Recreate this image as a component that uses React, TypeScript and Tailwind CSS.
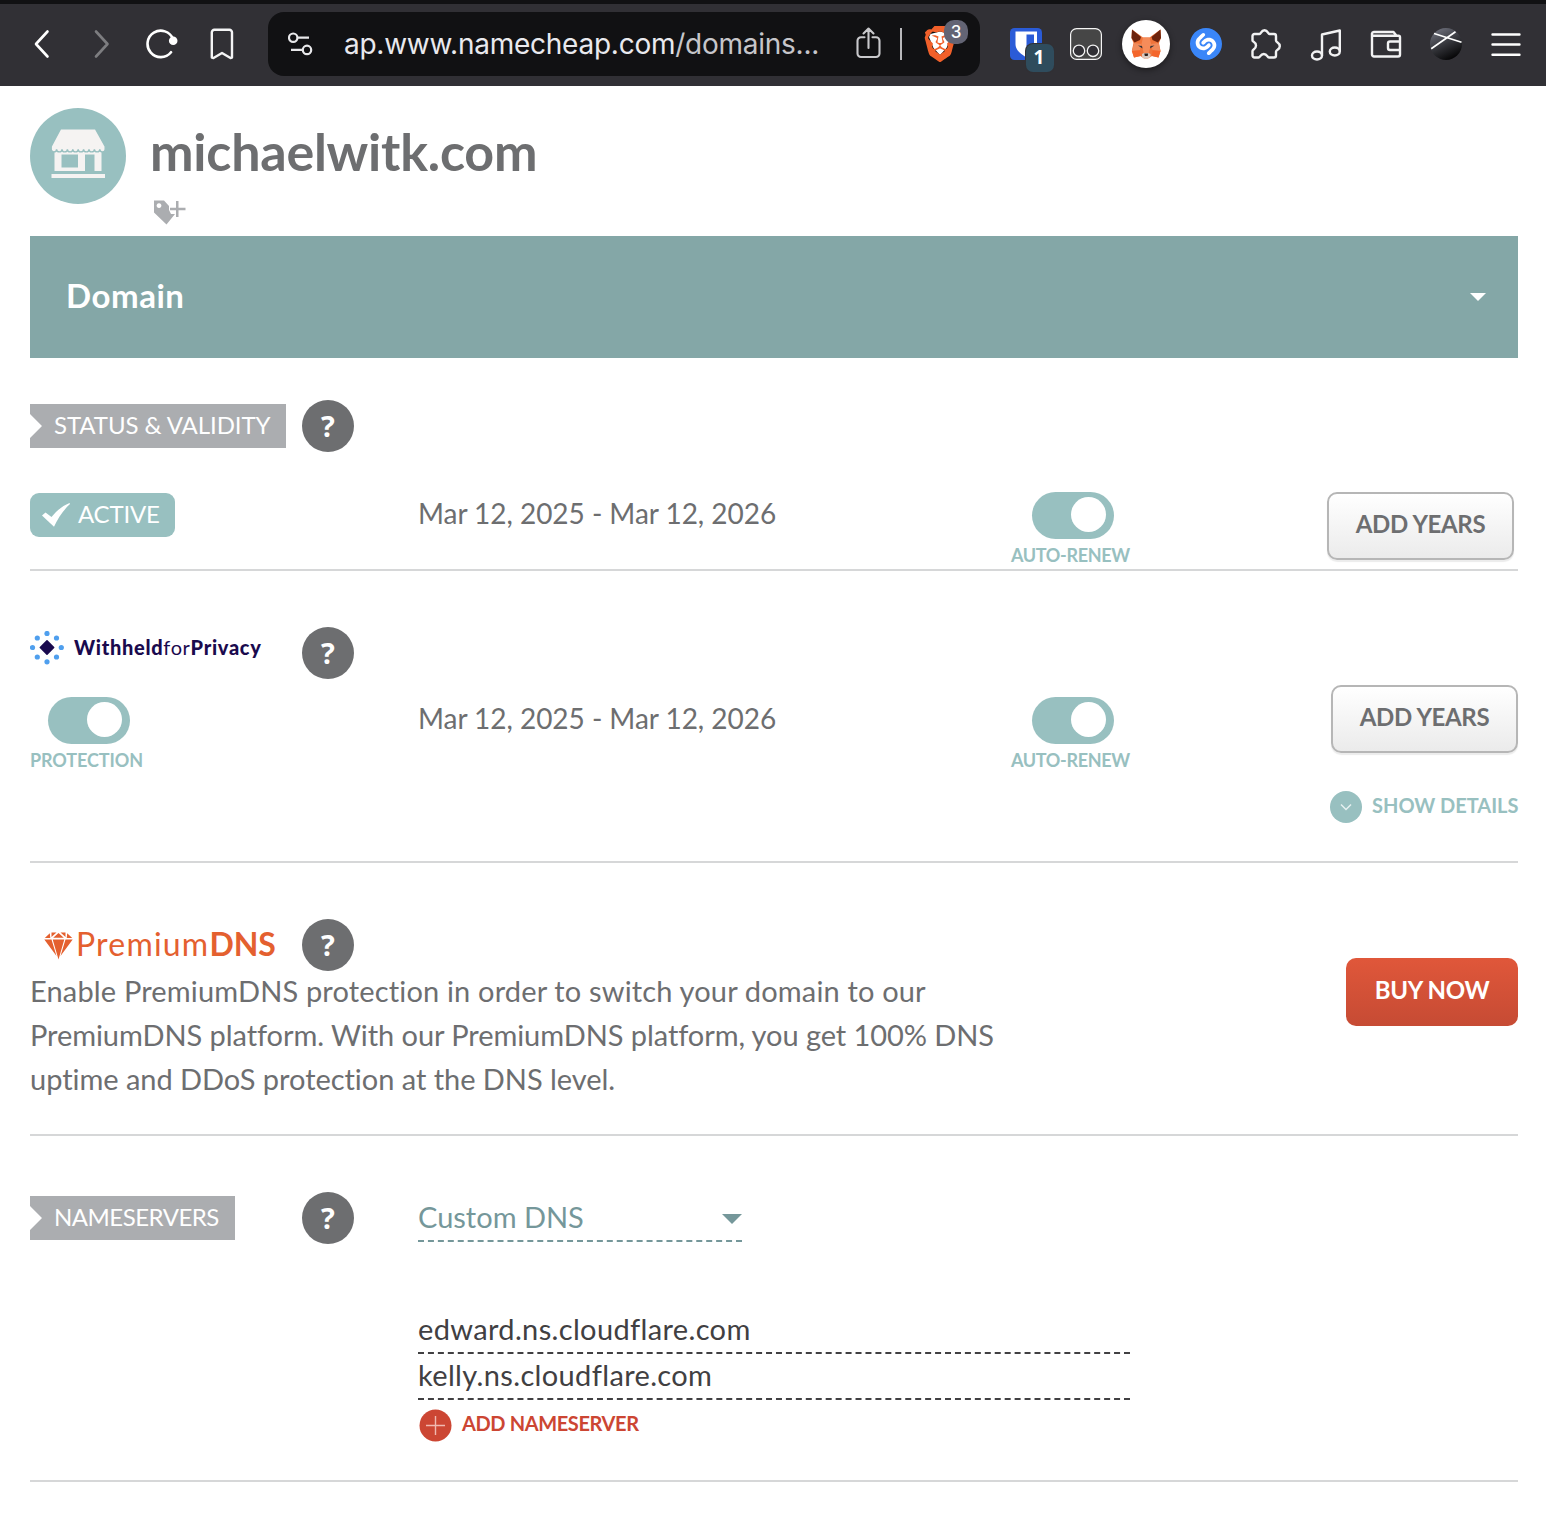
import React from "react";
import { SiBrave, SiShazam } from "react-icons/si";

const LINE = "#f2f2f3";

function BitwardenIcon() {
  return (
    <div className="relative h-8 w-8">
      <svg className="block" width="32" height="32" viewBox="0 0 32 32">
        <rect width="32" height="32" rx="4.5" fill="#2a5bd7" />
        <path d="M5.5 3.5H27V16c0 6-5 10-10.800 13C10.500 26 5.500 22 5.500 16Z" fill="#fff" />
        <path d="M16.500 6.500H24V16c0 4-3.500 7-7.500 9.500Z" fill="#2a5bd7" />
      </svg>
      <span className="absolute left-[15px] top-[15px] h-[30px] w-[30px] rounded-[8px] bg-[#313035]" />
      <span className="absolute left-4 top-4 flex h-7 w-7 items-center justify-center rounded-[7px] bg-[#2f4c5d] pb-[1px] pr-[2px] font-['Open_Sans',sans-serif] text-[19px] font-bold leading-none text-white">
        1
      </span>
    </div>
  );
}

function TampermonkeyIcon() {
  return (
    <svg width="32" height="32" viewBox="0 0 32 32" stroke="#f5f5f5">
      <rect x=".6" y=".6" width="30.800" height="30.800" rx="6" fill="#464646" strokeWidth="1.200" />
      <circle cx="9" cy="22.800" r="5.700" fill="#313035" strokeWidth="1.300" />
      <circle cx="23" cy="22.800" r="5.700" fill="#313035" strokeWidth="1.300" />
    </svg>
  );
}

function FoxIcon() {
  return (
    <div className="h-12 w-12 rounded-full bg-white shadow-[0_2px_6px_rgba(0,0,0,0.45)]">
      <svg width="48" height="48" viewBox="0 0 48 48">
        <path d="M10 9.500 21 17.500H27.500L38.500 9.500 39 18 37 23 38.500 31 36.500 37.500 30 36 26 38.500H22L18.500 36 12 37.500 9.800 31 11.500 23 9.500 18Z" fill="#f0743a" />
        <path d="M10 9.500 19 17 18 20 12.500 22.500 9.500 18Z" fill="#6d230c" />
        <path d="M38.500 9.500 29.500 17 30.500 20 36 22.500 39 18Z" fill="#6d230c" />
        <path d="M21 17.500H27.500L29 24 26.500 34H22L19.500 24Z" fill="#f58c5a" />
        <path d="M12 23 19.500 24 18 30 10 31Z" fill="#f08b5c" />
        <path d="M36.500 23 29 24 30.500 30 38.500 31Z" fill="#f08b5c" />
        <path d="M10 31 18 30.500 18.500 36 12 37.500Z" fill="#f4662c" />
        <path d="M38.500 31 30.500 30.500 30 36 36.500 37.500Z" fill="#f4662c" />
        <path d="M20 34 22 33H26.500L28.500 34 28.500 36.500 26 38.500H22L20 36.500Z" fill="#d9c9c0" />
        <path d="M22.300 33.500H26.200L25.700 36H22.800Z" fill="#2b211c" />
        <path d="m16 25.500 4 .5.500 2.500ZM32.500 25.500 28.500 26 28 28.500Z" fill="#2f343b" />
      </svg>
    </div>
  );
}

function Toolbar() {
  return (
    <header className="flex h-[86px] items-center border-t-4 border-[#111113] bg-[#313035] pb-[2px]">
      <div className="ml-[30px] flex w-[206px] items-center">
        <svg width="24" height="32" viewBox="0 0 24 32" fill="none" stroke="#fff" strokeWidth="2.600" strokeLinecap="round" strokeLinejoin="round">
          <path d="M17.500 3.500 6 16 17.500 28.500" />
        </svg>
        <svg className="ml-9" width="24" height="32" viewBox="0 0 24 32" fill="none" stroke="#7d7d80" strokeWidth="2.600" strokeLinecap="round" strokeLinejoin="round">
          <path d="M6 3.500 17.500 16 6 28.500" />
        </svg>
        <svg className="ml-8" width="32" height="32" viewBox="0 0 32 32" fill="none" stroke="#fff" strokeWidth="2.600" strokeLinecap="round">
          <path d="M27 11A13.200 13.200 0 1 0 25 24.200" />
          <circle cx="27.200" cy="12.800" r="3" fill="#fff" />
        </svg>
        <svg className="ml-[30px]" width="28" height="32" viewBox="0 0 28 32" fill="none" stroke="#f4f4f5" strokeWidth="2.400" strokeLinejoin="round">
          <path d="M6.300 1.800H21.500a2.500 2.500 0 0 1 2.500 2.500V29.600L22.500 30 14 25 5.500 30 3.800 29.600V4.300A2.500 2.500 0 0 1 6.300 1.800Z" />
        </svg>
      </div>
      <div className="ml-8 flex h-16 w-[712px] items-center rounded-[16px] bg-[#111113]">
        <svg className="ml-5" width="26" height="26" viewBox="0 0 26 26" fill="none" stroke="#e8e8ea" strokeWidth="2.200">
          <circle cx="5.200" cy="6.700" r="4.200" />
          <path d="M9.500 6.700H21M3 18.900H14.500" />
          <circle cx="19" cy="18.900" r="4.200" />
        </svg>
        <div className="ml-[30px] w-[476px] whitespace-nowrap font-['Inter',sans-serif] text-[28px] leading-[34px] tracking-[-0.25px] text-[#e9e9ee]">
          ap.www.namecheap.com<span className="text-[#c6c6ca]">/domains...</span>
        </div>
        <svg className="ml-9" width="26" height="34" viewBox="0 0 26 34" fill="none" stroke="#c9c9cc" strokeWidth="2.100" strokeLinecap="round" strokeLinejoin="round">
          <path d="M8.500 10.300H5a3.500 3.500 0 0 0-3.500 3.500V26.500a3.500 3.500 0 0 0 3.500 3.500H20a3.500 3.500 0 0 0 3.500-3.500V13.800A3.500 3.500 0 0 0 20 10.300H16.500M12.500 21V1.800M7.500 6.500 12.500 1.500 17.500 6.500" />
        </svg>
        <div className="ml-[18px] h-8 w-[2px] bg-[#b9b9bc]" />
        <div className="relative ml-5 h-9 w-9">
          <svg className="block" width="36" height="36" viewBox="0 0 36 36">
            <path d="M8.500 8 18 5.500 27.500 8 29 11 24.500 22 18 29 11.500 22 7 11Z" fill="#fff" />
            <SiBrave size={36} color="#f1602a" />
          </svg>
          <span className="absolute left-[22px] top-[-6px] flex h-6 w-6 items-center justify-center rounded-[10px] bg-[#636474] font-['Inter',sans-serif] text-[17px] font-medium leading-none text-white">
            3
          </span>
        </div>
      </div>
      <div className="ml-[30px] flex w-[512px] items-center justify-between">
        <BitwardenIcon />
        <TampermonkeyIcon />
        <div className="-mx-2">
          <FoxIcon />
        </div>
        <svg width="32" height="32" viewBox="0 0 32 32">
          <circle cx="16" cy="16" r="14" fill="#fff" />
          <SiShazam size={32} color="#3a86f8" />
        </svg>
        <svg width="32" height="32" viewBox="0 0 32 32" fill="none" stroke={LINE} strokeWidth="2.400" strokeLinejoin="round">
          <path d="M4.500 6H9.500C11.200 6 11 2.300 14.500 2.300S17.800 6 19.500 6H24a2 2 0 0 1 2 2V12.500C26 14.800 29.800 14.500 29.800 18.200S26 21.500 26 23.800V27.500a2 2 0 0 1-2 2H19C17 29.500 17.500 26 13.800 26S10.500 29.500 8.500 29.500H4.500a2 2 0 0 1-2-2V23C2.500 21.500 6 21.300 6 17.500S2.500 14 2.500 12.500V8a2 2 0 0 1 2-2Z" />
        </svg>
        <svg width="32" height="34" viewBox="0 0 32 34" fill="none" stroke={LINE} strokeWidth="2.400" strokeLinejoin="round">
          <ellipse cx="7" cy="28.500" rx="5" ry="4" />
          <ellipse cx="24.800" cy="24.500" rx="5" ry="4" />
          <path d="M12 28.500V7.500L29.800 3.500V24.500" />
        </svg>
        <svg width="32" height="32" viewBox="0 0 32 32" fill="none" stroke={LINE} strokeWidth="2.400" strokeLinejoin="round">
          <path d="M2 5.500A1.800 1.800 0 0 1 3.800 4H23.500L26.500 7.800H28.500A1.500 1.500 0 0 1 30 9.300V26.500A2 2 0 0 1 28 28.500H4a2 2 0 0 1-2-2ZM2.500 7.800H27M30 13.500H20a2 2 0 0 0-2 2V20a2 2 0 0 0 2 2H30" />
        </svg>
        <svg width="32" height="32" viewBox="0 0 32 32">
          <defs>
            <linearGradient id="orb" x1="0.100" y1="0" x2=".6" y2="1">
              <stop offset="0" stopColor="#757784" />
              <stop offset=".5" stopColor="#3a3b41" />
              <stop offset="1" stopColor="#060607" />
            </linearGradient>
          </defs>
          <circle cx="16" cy="16" r="16" fill="url(#orb)" />
          <path d="M4 5.500 31.500 14.200M1.200 20.700 25.500 3.700" stroke="#fff" strokeWidth="1.700" />
        </svg>
        <svg width="32" height="32" viewBox="0 0 32 32" stroke="#fff" strokeWidth="2.400" strokeLinecap="round">
          <path d="M2.500 6.500H29.500M2.500 16.500H29.500M2.500 26.700H29.500" />
        </svg>
      </div>
    </header>
  );
}

function Help() {
  return (
    <span className="flex h-[52px] w-[52px] items-center justify-center rounded-full bg-[#6d6e70] pb-[2px] font-['Open_Sans',sans-serif] text-[29px] font-bold leading-none text-white">
      ?
    </span>
  );
}

function Ribbon({ children, className }: { children: React.ReactNode; className: string }) {
  return (
    <div className={"flex h-11 items-center whitespace-nowrap bg-[#abadb0] pb-[2px] text-[24px] leading-none text-white [clip-path:polygon(0_0,100%_0,100%_100%,0_100%,0_34px,12px_22px,0_10px)] " + className}>
      {children}
    </div>
  );
}

function Toggle() {
  return (
    <div className="flex h-[47px] w-[82px] items-center justify-end rounded-full bg-[#98c0c0] pr-2">
      <span className="mb-[2px] h-[35px] w-[35px] rounded-full bg-white" />
    </div>
  );
}

function AutoRenew() {
  return (
    <div className="w-[130px]">
      <div className="ml-[21px]">
        <Toggle />
      </div>
      <div className="mt-[5px] whitespace-nowrap text-[18px] font-bold leading-[22px] tracking-[-0.350px] text-[#98c0c0]">
        AUTO-RENEW
      </div>
    </div>
  );
}

function AddYears() {
  return (
    <button className="flex h-[68px] w-[187px] items-center justify-center rounded-[10px] border-2 border-[#b6b6b6] bg-linear-to-b from-white to-[#ebebeb] pb-1 text-[24px] font-bold leading-none tracking-[-0.350px] text-[#6d6e70] shadow-[0_2px_1px_#ececec]">
      ADD YEARS
    </button>
  );
}

function WithheldLogo() {
  const dots = [
    [17, 2.500], [26.500, 7], [31.300, 16.500], [26.500, 26], [17, 30.800], [7.300, 26], [2.500, 16.500], [7.300, 7],
  ];
  return (
    <div className="flex h-[34px] w-[272px] items-center">
      <svg className="mt-[2px]" width="34" height="34" viewBox="0 0 34 34">
        {dots.map(([x, y]) => (
          <circle key={x + "-" + y} cx={x} cy={y} r="2.600" fill="#4f9fee" />
        ))}
        <path d="M17 9.800 23.700 16.500 17 23.200 10.300 16.500Z" fill="#1a0a4e" stroke="#1a0a4e" strokeWidth="1.500" strokeLinejoin="round" />
      </svg>
      <span className="ml-[10px] whitespace-nowrap text-[20px] leading-[34px] tracking-[0.650px] text-[#1a0a4e]">
        <b className="font-black tracking-[0.700px]">Withheld</b>for<b className="font-black tracking-[0.700px]">Privacy</b>
      </span>
    </div>
  );
}

function PremiumLogo() {
  return (
    <div className="flex h-[52px] w-[272px] items-center pl-[14px]">
      <svg className="mt-[2px] shrink-0" width="29" height="28" viewBox="0 0 29 28" fill="#e4602f">
        <path d="M7.500.5 12.500.5 7.500 5ZM21.500.5H16.500L21.500 5ZM14.500 1 19.800 5.800H9.200ZM5.800 1.200 6.300 6H.8ZM23.200 1.200 22.700 6H28.200Z" />
        <path d="M.3 7.500H7.500L12.500 24ZM28.700 7.500H21.500L16.500 24ZM8.700 7.500H20.300L14.500 27.500Z" />
      </svg>
      <span className="ml-[3px] whitespace-nowrap pb-[2px] text-[32px] leading-[40px] text-[#e4602f]">
        <span className="tracking-[1.200px]">Premium</span>
        <b className="font-bold">DNS</b>
      </span>
    </div>
  );
}

const blurb: [string, string][] = [
  ["tracking-[0.160px]", "Enable PremiumDNS protection in order to switch your domain to our"],
  ["tracking-[-0.070px]", "PremiumDNS platform. With our PremiumDNS platform, you get 100% DNS"],
  ["tracking-[-0.040px]", "uptime and DDoS protection at the DNS level."],
];

export default function App() {
  return (
    <div className="min-h-[1514px] w-[1546px] bg-white font-['Lato',sans-serif] text-[#6d6e70] [font-variant-ligatures:none]">
      <Toolbar />
      <main className="ml-[30px] w-[1488px]">
        <div className="flex h-[150px] pt-[22px]">
          <svg width="96" height="96" viewBox="0 0 96 96">
            <circle cx="48" cy="48" r="48" fill="#98c0c0" />
            <g fill="#f5f3f2">
              <path fillRule="evenodd" d="M24.500 43H71.500V63H64.500V46.500H55V63H24.500ZM31.500 46.500V59.500H48V46.500Z" />
              <path
                stroke="#98c0c0"
                strokeWidth="1.400"
                d="M30.500 20.800H65.500L75.200 38.500V41.200a2.700 2.700 0 0 1-5.400 0 2.700 2.700 0 0 1-5.400 0 2.700 2.700 0 0 1-5.400 0 2.700 2.700 0 0 1-5.400 0 2.700 2.700 0 0 1-5.400 0 2.700 2.700 0 0 1-5.400 0 2.700 2.700 0 0 1-5.400 0 2.700 2.700 0 0 1-5.400 0 2.700 2.700 0 0 1-5.400 0 2.700 2.700 0 0 1-5.400 0V38.500Z"
              />
              <rect x="21.500" y="66" width="53.500" height="4" />
            </g>
          </svg>
          <div className="ml-6">
            <h1 className="mt-[15px] whitespace-nowrap text-[52px] font-bold leading-[56px] tracking-[-0.230px]">michaelwitk.com</h1>
            <svg className="ml-[3px] mt-[20px]" width="34" height="28" viewBox="0 0 34 28" fill="#abadb0">
              <path fillRule="evenodd" d="M1 1.500H11L16 7V11L18 15H22L13.500 25.500 1 13.500ZM6 4.200a2.400 2.400 0 1 0 .01 0Z" />
              <path d="M23 2H25.500V8.700H32.500V11.300H25.500V18H23V11.300H17V8.700H23Z" />
            </svg>
          </div>
        </div>

        <div className="flex h-[122px] items-center justify-between bg-[#84a7a7] pl-[36px] pr-8 text-white">
          <span className="mb-1 text-[33px] font-bold leading-none tracking-[0.550px]">Domain</span>
          <svg width="16" height="8" viewBox="0 0 16 8" fill="#fff">
            <path d="M0 0H16L8 8Z" />
          </svg>
        </div>

        <section className="h-[213px] border-b-2 border-[#d6d7d8] pt-[42px]">
          <div className="flex items-center">
            <Ribbon className="w-[256px] pl-6 tracking-[-0.080px]">STATUS &amp; VALIDITY</Ribbon>
            <div className="ml-4">
              <Help />
            </div>
          </div>
          <div className="mt-10 flex items-start">
            <div className="w-[388px]">
              <div className="mt-[1px] flex h-11 w-[145px] items-center rounded-[9px] bg-[#98c0c0] pl-3 text-[24px] leading-none text-white">
                <svg width="28" height="24" viewBox="0 0 28 24" fill="#fff">
                  <path d="M0 12.500 3.500 9.500 9.500 14C14 8.500 20 3 27.500 0L28 1C21.500 7 16 15 12 23.800Z" />
                </svg>
                <span className="mb-[2px] ml-2 tracking-[-0.200px]">ACTIVE</span>
              </div>
            </div>
            <div className="w-[593px] text-[28px] leading-[42px] tracking-[-0.040px]">Mar 12, 2025 - Mar 12, 2026</div>
            <AutoRenew />
            <div className="ml-auto mr-1">
              <AddYears />
            </div>
          </div>
        </section>

        <section className="h-[292px] border-b-2 border-[#d6d7d8] pt-[56px]">
          <div className="flex">
            <div className="mt-[3px]">
              <WithheldLogo />
            </div>
            <Help />
          </div>
          <div className="mt-[6px] flex items-start">
            <div className="mt-3 w-[388px]">
              <div className="ml-[18px]">
                <Toggle />
              </div>
              <div className="mt-[5px] text-[18px] font-bold leading-[22px] tracking-[-0.100px] text-[#98c0c0]">PROTECTION</div>
            </div>
            <div className="mt-3 w-[593px] text-[28px] leading-[42px] tracking-[-0.040px]">Mar 12, 2025 - Mar 12, 2026</div>
            <div className="mt-3">
              <AutoRenew />
            </div>
            <div className="ml-auto flex flex-col items-end">
              <AddYears />
              <div className="mt-[38px] flex w-[188px] items-center text-[20px] font-bold leading-none text-[#98c0c0]">
                <svg className="shrink-0" width="32" height="32" viewBox="0 0 32 32">
                  <circle cx="16" cy="16" r="16" fill="#98c0c0" />
                  <path d="M11 13.500 16 18.500 21 13.500" fill="none" stroke="#e6f0f0" strokeWidth="1.500" />
                </svg>
                <span className="mb-[5px] ml-[10px] whitespace-nowrap">SHOW DETAILS</span>
              </div>
            </div>
          </div>
        </section>

        <section className="flex h-[273px] justify-between border-b-2 border-[#d6d7d8] pt-[56px]">
          <div>
            <div className="flex h-[50px]">
              <PremiumLogo />
              <Help />
            </div>
            {blurb.map(([cls, text]) => (
              <p key={text} className={"whitespace-nowrap text-[29px] leading-[44px] " + cls}>
                {text}
              </p>
            ))}
          </div>
          <button className="mt-[39px] flex h-[68px] w-[172px] items-center justify-center rounded-[10px] bg-linear-to-b from-[#e0573a] to-[#c64b34] pb-1 text-[24px] font-bold leading-none tracking-[-0.300px] text-white">
            BUY NOW
          </button>
        </section>

        <section className="h-[346px] border-b-2 border-[#d6d7d8] pt-[56px]">
          <div className="flex">
            <div className="mt-1 w-[272px]">
              <Ribbon className="w-[205px] pl-6 tracking-[-0.500px]">NAMESERVERS</Ribbon>
            </div>
            <Help />
            <div className="ml-16 flex h-[50px] w-[324px] items-center justify-between border-b-2 border-dashed border-[#75979a] text-[29px] leading-none text-[#75979a]">
              <span>Custom DNS</span>
              <svg className="mt-[5px]" width="20" height="10" viewBox="0 0 20 10" fill="#75979a">
                <path d="M0 0H20L10 10Z" />
              </svg>
            </div>
          </div>
          <div className="ml-[388px] mt-16 w-[712px] text-[29px] tracking-[0.350px] text-[#414042]">
            <div className="h-[46px] border-b-2 border-dashed border-[#414042] leading-[42px]">edward.ns.cloudflare.com</div>
            <div className="h-[46px] border-b-2 border-dashed border-[#414042] leading-[42px]">kelly.ns.cloudflare.com</div>
          </div>
          <div className="ml-[389px] mt-[9px] flex items-center text-[20px] font-bold leading-none tracking-[-0.380px] text-[#cc4633]">
            <svg width="33" height="33" viewBox="0 0 33 33">
              <circle cx="16.500" cy="16.500" r="16" fill="#cc4633" />
              <path d="M7 16.500H26M16.500 7V26" stroke="#f0b9b0" strokeWidth="1.400" />
            </svg>
            <span className="mb-[5px] ml-[10px]">ADD NAMESERVER</span>
          </div>
        </section>
      </main>
    </div>
  );
}
